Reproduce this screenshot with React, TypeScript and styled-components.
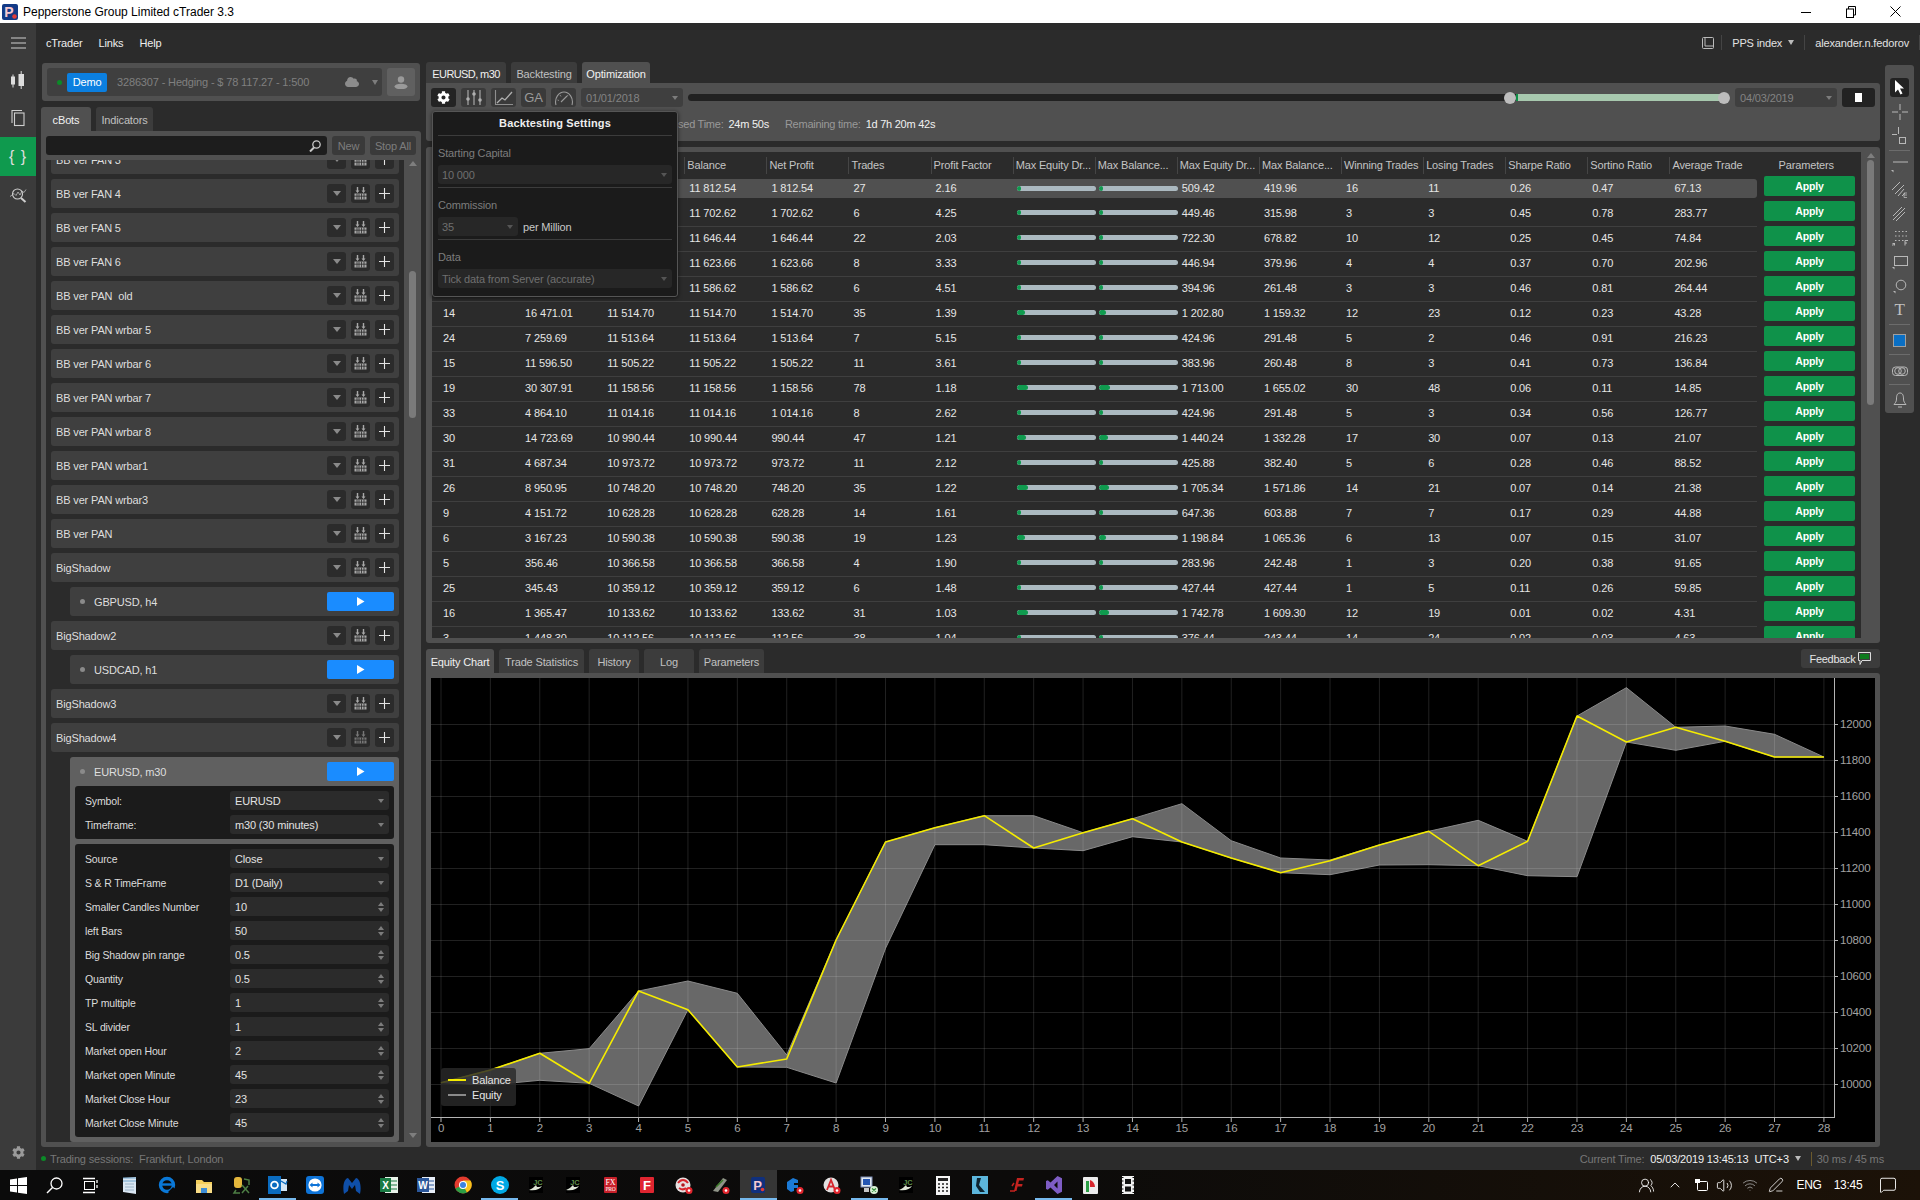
import type { FC, ReactNode } from 'react'
import { ChevronUp, MessageSquare, PenLine, UsersRound, Volume2, Wifi } from 'lucide-react'
import { FaCloud, FaCog } from 'react-icons/fa'
import styled, { createGlobalStyle } from 'styled-components'

const FONT = '"Liberation Sans", Arial, sans-serif'

const GlobalStyle = createGlobalStyle`
  html, body {
    margin: 0;
    padding: 0;
    background: #2b2b2b;
  }
  * {
    box-sizing: border-box;
  }
  body {
    font-family: ${FONT};
    font-size: 11px;
    letter-spacing: -0.15px;
    color: #e2e2e2;
  }
`

// [pass, fitness, balance, net profit, trades, profit factor, max eq dd, max bal dd, win, lose, sharpe, sortino, avg]
const RESULTS: string[][] = [
  ['', '', '11 812.54', '1 812.54', '27', '2.16', '509.42', '419.96', '16', '11', '0.26', '0.47', '67.13'],
  ['', '', '11 702.62', '1 702.62', '6', '4.25', '449.46', '315.98', '3', '3', '0.45', '0.78', '283.77'],
  ['', '', '11 646.44', '1 646.44', '22', '2.03', '722.30', '678.82', '10', '12', '0.25', '0.45', '74.84'],
  ['', '', '11 623.66', '1 623.66', '8', '3.33', '446.94', '379.96', '4', '4', '0.37', '0.70', '202.96'],
  ['', '', '11 586.62', '1 586.62', '6', '4.51', '394.96', '261.48', '3', '3', '0.46', '0.81', '264.44'],
  ['14', '16 471.01', '11 514.70', '1 514.70', '35', '1.39', '1 202.80', '1 159.32', '12', '23', '0.12', '0.23', '43.28'],
  ['24', '7 259.69', '11 513.64', '1 513.64', '7', '5.15', '424.96', '291.48', '5', '2', '0.46', '0.91', '216.23'],
  ['15', '11 596.50', '11 505.22', '1 505.22', '11', '3.61', '383.96', '260.48', '8', '3', '0.41', '0.73', '136.84'],
  ['19', '30 307.91', '11 158.56', '1 158.56', '78', '1.18', '1 713.00', '1 655.02', '30', '48', '0.06', '0.11', '14.85'],
  ['33', '4 864.10', '11 014.16', '1 014.16', '8', '2.62', '424.96', '291.48', '5', '3', '0.34', '0.56', '126.77'],
  ['30', '14 723.69', '10 990.44', '990.44', '47', '1.21', '1 440.24', '1 332.28', '17', '30', '0.07', '0.13', '21.07'],
  ['31', '4 687.34', '10 973.72', '973.72', '11', '2.12', '425.88', '382.40', '5', '6', '0.28', '0.46', '88.52'],
  ['26', '8 950.95', '10 748.20', '748.20', '35', '1.22', '1 705.34', '1 571.86', '14', '21', '0.07', '0.14', '21.38'],
  ['9', '4 151.72', '10 628.28', '628.28', '14', '1.61', '647.36', '603.88', '7', '7', '0.17', '0.29', '44.88'],
  ['6', '3 167.23', '10 590.38', '590.38', '19', '1.23', '1 198.84', '1 065.36', '6', '13', '0.07', '0.15', '31.07'],
  ['5', '356.46', '10 366.58', '366.58', '4', '1.90', '283.96', '242.48', '1', '3', '0.20', '0.38', '91.65'],
  ['25', '345.43', '10 359.12', '359.12', '6', '1.48', '427.44', '427.44', '1', '5', '0.11', '0.26', '59.85'],
  ['16', '1 365.47', '10 133.62', '133.62', '31', '1.03', '1 742.78', '1 609.30', '12', '19', '0.01', '0.02', '4.31'],
  ['3', '1 448.30', '10 112.56', '112.56', '38', '1.04', '376.44', '243.44', '14', '24', '0.02', '0.03', '4.63'],
]

const COLUMNS = [
  'Pass', 'Fitness', 'Equity', 'Balance', 'Net Profit', 'Trades', 'Profit Factor', 'Max Equity Dr...', 'Max Balance...',
  'Max Equity Dr...', 'Max Balance...', 'Winning Trades', 'Losing Trades', 'Sharpe Ratio', 'Sortino Ratio', 'Average Trade',
]

const BOTS = [
  'BB ver FAN 3', 'BB ver FAN 4', 'BB ver FAN 5', 'BB ver FAN 6', 'BB ver PAN  old', 'BB ver PAN wrbar 5', 'BB ver PAN wrbar 6',
  'BB ver PAN wrbar 7', 'BB ver PAN wrbar 8', 'BB ver PAN wrbar1', 'BB ver PAN wrbar3', 'BB ver PAN',
]

const PARAMS: { label: string; value: string; select?: boolean }[] = [
  { label: 'Source', value: 'Close', select: true },
  { label: 'S & R TimeFrame', value: 'D1 (Daily)', select: true },
  { label: 'Smaller Candles Number', value: '10' },
  { label: 'left Bars', value: '50' },
  { label: 'Big Shadow pin range', value: '0.5' },
  { label: 'Quantity', value: '0.5' },
  { label: 'TP multiple', value: '1' },
  { label: 'SL divider', value: '1' },
  { label: 'Market open Hour', value: '2' },
  { label: 'Market open Minute', value: '45' },
  { label: 'Market Close Hour', value: '23' },
  { label: 'Market Close Minute', value: '45' },
]

// chart pixel traces, measured against the screenshot
const BALANCE = [1328, 1290, 1240, 1330, 1053, 1109, 1281, 1257, 900, 606, 563, 527, 624, 578, 536, 606, 654, 698, 662, 615, 574, 677, 604, 228, 306, 262, 304, 351, 351]
const EQUITY_HIGH = [1328, 1290, 1240, 1226, 1053, 1023, 1060, 1245, 900, 606, 563, 527, 527, 578, 536, 491, 602, 654, 660, 615, 574, 541, 604, 228, 143, 262, 258, 283, 351]
const EQUITY_LOW = [1328, 1335, 1321, 1330, 1398, 1109, 1281, 1282, 1329, 925, 614, 614, 624, 632, 590, 606, 654, 698, 704, 675, 674, 677, 707, 710, 306, 331, 304, 351, 351]

const chartX = (i: number) => 10 + 49.39 * i
const chartY = (p: number) => p / 3 - 38
const toPoint = (p: number, i: number) => `${chartX(i).toFixed(1)},${chartY(p).toFixed(1)}`
const toPoints = (trace: number[]) => trace.map(toPoint).join(' ')

const Page = styled.div`
  display: flex;
  flex-direction: column;
  width: 1920px;
  height: 1200px;
  overflow: hidden;
`

const TitleBar = styled.div`
  display: flex;
  align-items: center;
  height: 23px;
  background: #fff;
  color: #000;
  font-size: 12px;
  letter-spacing: 0;
  padding-left: 2px;
`

const TitleText = styled.span`
  margin-left: 5px;
`

const WindowButtons = styled.div`
  display: flex;
  margin-left: auto;
  padding-right: 2px;
`

const WindowButton = styled.div`
  display: flex;
  align-items: center;
  justify-content: center;
  width: 45px;
  height: 20px;
`

const Body = styled.div`
  display: flex;
  height: 1147px;
`

const Rail = styled.div`
  display: flex;
  flex-direction: column;
  align-items: stretch;
  width: 36px;
  background: #3b3b3b;
  padding-top: 1px;
`

const RailItem = styled.div<{ $active?: boolean; $h?: number }>`
  display: flex;
  align-items: center;
  justify-content: center;
  height: ${({ $h }) => $h ?? 38}px;
  background: ${({ $active }) => ($active ? '#0f9a4e' : 'transparent')};
  color: #ddd;
`

const Braces = styled.span`
  font-size: 16px;
  letter-spacing: 1px;
  font-weight: 400;
`

const RailFooter = styled.div`
  display: flex;
  justify-content: center;
  margin-top: auto;
  padding-bottom: 11px;
  color: #9a9a9a;
`

const Workspace = styled.div`
  display: flex;
  flex: 1;
  flex-direction: column;
  min-width: 0;
`

const MenuBar = styled.div`
  display: flex;
  align-items: center;
  height: 39px;
  padding: 0 0 0 10px;
  font-size: 11px;
`

const MenuItem = styled.span`
  margin-right: 16px;
  color: #eee;
`

const MenuRight = styled.div`
  display: flex;
  align-items: center;
  margin-left: auto;
  height: 15px;
`

const MenuDivider = styled.span<{ $before?: number; $after?: number }>`
  width: 1px;
  height: 15px;
  background: #444;
  margin: 0 ${({ $after }) => $after ?? 10}px 0 ${({ $before }) => $before ?? 10}px;
`

const SmallCaret = styled.span`
  display: inline-block;
  width: 0;
  height: 0;
  margin-left: 6px;
  border-left: 3px solid transparent;
  border-right: 3px solid transparent;
  border-top: 5px solid #bbb;
`

const Panes = styled.div`
  display: flex;
  flex: 1;
  min-height: 0;
  gap: 5px;
  padding-left: 5px;
`

const LeftColumn = styled.div`
  display: flex;
  flex-direction: column;
  width: 380px;
`

const AccountPanel = styled.div`
  display: flex;
  gap: 5px;
  width: 378px;
  height: 38px;
  margin: 1px 0 6px 1px;
  padding: 5px;
  background: #505050;
  border-radius: 3px;
`

const AccountBox = styled.div`
  display: flex;
  flex: 1;
  align-items: center;
  padding-left: 10px;
  background: #3f3f3f;
  border-radius: 3px;
  color: #808080;
  font-size: 11px;
`

const GreenDot = styled.span<{ $size?: number }>`
  width: ${({ $size }) => $size ?? 5}px;
  height: ${({ $size }) => $size ?? 5}px;
  border-radius: 50%;
  background: #0c8a28;
  flex-shrink: 0;
`

const DemoBadge = styled.span`
  display: flex;
  align-items: center;
  justify-content: center;
  width: 40px;
  height: 19px;
  margin: 0 10px 0 5px;
  background: #0b7fe0;
  border-radius: 2px;
  color: #fff;
`

const AccountCloud = styled.span`
  display: flex;
  margin-left: auto;
  color: #8c8c8c;
`

const AccountCaret = styled.span`
  display: inline-block;
  margin: 0 4px 0 13px;
  border-left: 3px solid transparent;
  border-right: 3px solid transparent;
  border-top: 5px solid #7d7d7d;
`

const UserBox = styled.div`
  display: flex;
  align-items: center;
  justify-content: center;
  width: 28px;
  background: #606060;
  border-radius: 3px;
`

const TabRow = styled.div<{ $h: number }>`
  display: flex;
  gap: 5px;
  height: ${({ $h }) => $h}px;
  flex-shrink: 0;
`

const Tab = styled.div<{ $active?: boolean; $w: number; $tight?: boolean }>`
  display: flex;
  align-items: center;
  justify-content: center;
  width: ${({ $w }) => $w}px;
  padding-top: 2px;
  background: ${({ $active }) => ($active ? '#505050' : '#3c3c3c')};
  color: ${({ $active, $tight }) => ($active || $tight ? '#f0f0f0' : '#c0c0c0')};
  border-radius: 3px 3px 0 0;
  font-size: 11px;
  letter-spacing: ${({ $tight }) => ($tight ? '-0.6px' : '-0.15px')};
`

const BotsPanel = styled.div`
  display: flex;
  flex: 1;
  flex-direction: column;
  min-height: 0;
  padding: 5px 0 5px 5px;
  background: #505050;
  border-radius: 0 3px 3px 3px;
`

const SearchRow = styled.div`
  display: flex;
  gap: 5px;
  height: 19px;
  margin-bottom: 5px;
  padding-right: 5px;
  flex-shrink: 0;
`

const SearchInput = styled.div`
  display: flex;
  flex: 1;
  align-items: center;
  justify-content: flex-end;
  padding-right: 6px;
  background: #1d1d1d;
  border-radius: 3px;
`

const GhostButton = styled.div<{ $w: number }>`
  display: flex;
  align-items: center;
  justify-content: center;
  width: ${({ $w }) => $w}px;
  background: #3a3a3a;
  border-radius: 3px;
  color: #7d7d7d;
`

const ListArea = styled.div`
  display: flex;
  flex: 1;
  min-height: 0;
`

const BotList = styled.div`
  flex: 1;
  min-width: 0;
  overflow: hidden;
  background: #2b2b2b;
`

const BotScroll = styled.div`
  display: flex;
  flex-direction: column;
  gap: 5px;
  margin-top: -15px;
  padding: 0 5px;
`

const BotCard = styled.div`
  display: flex;
  flex-shrink: 0;
  align-items: center;
  height: 29px;
  padding: 0 5px;
  background: #3f3f3f;
  border-radius: 3px;
  color: #dedede;
  font-size: 11px;
`

const BotName = styled.span`
  white-space: pre;
`

const BotActions = styled.div`
  display: flex;
  gap: 5px;
  margin-left: auto;
`

const SquareButton = styled.div`
  display: flex;
  align-items: center;
  justify-content: center;
  width: 19px;
  height: 19px;
  background: #2b2b2b;
  border-radius: 3px;
`

const InstanceCard = styled.div<{ $open?: boolean }>`
  display: flex;
  flex-shrink: 0;
  flex-direction: column;
  margin-left: 19px;
  padding: ${({ $open }) => ($open ? '0 5px 5px' : '0 5px')};
  background: ${({ $open }) => ($open ? '#606060' : '#3f3f3f')};
  border-radius: 3px;
`

const InstanceHead = styled.div`
  display: flex;
  align-items: center;
  height: 29px;
  padding-left: 5px;
  color: #dedede;
`

const InstanceDot = styled.span`
  width: 5px;
  height: 5px;
  margin-right: 9px;
  border-radius: 50%;
  background: #8a8a8a;
`

const PlayButton = styled.div`
  display: flex;
  align-items: center;
  justify-content: center;
  width: 67px;
  height: 19px;
  margin-left: auto;
  background: #1a8cff;
  border-radius: 2px;
`

const ParamBlock = styled.div`
  display: flex;
  flex-direction: column;
  gap: 5px;
  padding: 5px;
  background: #1b1b1b;
  border-radius: 3px;
  & + & {
    margin-top: 5px;
  }
`

const ParamRow = styled.div`
  display: flex;
  align-items: center;
  height: 19px;
  padding-left: 5px;
  color: #dcdcdc;
`

const ParamLabel = styled.span`
  width: 145px;
  flex-shrink: 0;
  font-size: 10.5px;
`

const ParamInput = styled.div`
  display: flex;
  align-items: center;
  justify-content: space-between;
  width: 159px;
  height: 19px;
  padding: 0 5px;
  background: #2b2b2b;
  border-radius: 3px;
  color: #e2e2e2;
`

const Caret = styled.span<{ $up?: boolean; $color?: string; $size?: number }>`
  display: inline-block;
  width: 0;
  height: 0;
  border-left: ${({ $size }) => $size ?? 3}px solid transparent;
  border-right: ${({ $size }) => $size ?? 3}px solid transparent;
  border-top: ${({ $up, $color, $size }) => ($up ? 'none' : `${($size ?? 3) + 1}px solid ${$color ?? '#7c7c7c'}`)};
  border-bottom: ${({ $up, $color, $size }) => ($up ? `${($size ?? 3) + 1}px solid ${$color ?? '#7c7c7c'}` : 'none')};
`

const Spinner = styled.span`
  display: flex;
  flex-direction: column;
  gap: 2px;
`

const ScrollColumn = styled.div<{ $w: number }>`
  display: flex;
  flex-direction: column;
  align-items: center;
  width: ${({ $w }) => $w}px;
  flex-shrink: 0;
  padding-top: 1px;
`

const ScrollThumb = styled.div<{ $h: number; $top: number }>`
  width: 7px;
  height: ${({ $h }) => $h}px;
  margin-top: ${({ $top }) => $top}px;
  background: #7a7a7a;
  border-radius: 4px;
`

const ScrollEnd = styled.div`
  margin-top: auto;
  padding-bottom: 2px;
`

const RightColumn = styled.div`
  position: relative;
  display: flex;
  flex-direction: column;
  width: 1454px;
`

const ControlsPanel = styled.div`
  height: 58px;
  flex-shrink: 0;
  padding: 5px;
  background: #505050;
  border-radius: 0 3px 3px 3px;
`

const ToolRow = styled.div`
  display: flex;
  gap: 5px;
  height: 19px;
`

const ToolButton = styled.div<{ $active?: boolean }>`
  display: flex;
  align-items: center;
  justify-content: center;
  width: 25px;
  background: ${({ $active }) => ($active ? '#242424' : '#3a3a3a')};
  border-radius: 3px;
  color: ${({ $active }) => ($active ? '#fff' : '#9a9a9a')};
  font-size: 13px;
`

const DateField = styled.div`
  display: flex;
  align-items: center;
  justify-content: space-between;
  width: 102px;
  padding: 0 5px;
  background: #3f3f3f;
  border-radius: 3px;
  color: #838383;
`

const Slider = styled.div`
  position: relative;
  flex: 1;
  height: 7px;
  margin-top: 6px;
  background: #212121;
  border-radius: 4px;
`

const SliderFill = styled.div`
  position: absolute;
  top: 0;
  bottom: 0;
  left: 828px;
  width: 208px;
  background: #a7c8ae;
  border-left: 2px solid #0f8f48;
`

const SliderThumb = styled.div<{ $left: number }>`
  position: absolute;
  top: -2px;
  left: ${({ $left }) => $left}px;
  width: 12px;
  height: 12px;
  background: #bdbdbd;
  border-radius: 50%;
`

const StopButton = styled.div`
  display: flex;
  align-items: center;
  justify-content: center;
  width: 33px;
  background: #222;
  border-radius: 3px;
`

const StopMark = styled.span`
  width: 7px;
  height: 9px;
  background: #fff;
`

const TimeRow = styled.div`
  display: flex;
  align-items: center;
  height: 14px;
  margin-top: 10px;
  padding-left: 226px;
`

const TimeLabel = styled.span`
  color: #999;
  letter-spacing: -0.25px;
`

const TimeValue = styled.span<{ $gap: number }>`
  margin: 0 ${({ $gap }) => $gap}px 0 5px;
  color: #f0f0f0;
  letter-spacing: -0.25px;
`

const TablePanel = styled.div`
  display: flex;
  height: 496px;
  flex-shrink: 0;
  margin: 6px 0;
  padding: 5px 0 5px 6px;
  background: #505050;
  border-radius: 3px;
`

const ResultsTable = styled.div`
  flex: 1;
  min-width: 0;
  overflow: hidden;
  background: #2b2b2b;
  border-radius: 3px 0 0 0;
`

const HeaderRow = styled.div`
  display: flex;
  height: 27px;
  padding: 0 0 1px 6px;
  align-items: center;
`

const HeaderCell = styled.div`
  width: 82.1px;
  flex-shrink: 0;
  height: 17px;
  line-height: 17px;
  padding-left: 2px;
  border-left: 1px solid #454545;
  color: #c4c4c4;
  white-space: nowrap;
  overflow: hidden;
`

const ParamsHeader = styled.div`
  flex: 1;
  text-align: center;
  color: #c4c4c4;
`

const ResultRow = styled.div`
  display: flex;
  height: 25px;
  align-items: flex-start;
`

const RowBand = styled.div<{ $selected?: boolean }>`
  display: flex;
  align-items: center;
  width: 1325px;
  height: ${({ $selected }) => ($selected ? '19px' : '23px')};
  padding: ${({ $selected }) => ($selected ? '0 0 1px 6px' : '0 0 5px 6px')};
  background: ${({ $selected }) => ($selected ? '#505050' : 'transparent')};
  border-radius: ${({ $selected }) => ($selected ? '3px' : '0')};
  border-bottom: ${({ $selected }) => ($selected ? 'none' : '1px solid #3f3f3f')};
`

const Cell = styled.div`
  width: 82.1px;
  flex-shrink: 0;
  padding-left: 5px;
  color: #e6e6e6;
  white-space: nowrap;
`

const BarCell = styled.div`
  width: 82.1px;
  flex-shrink: 0;
  padding-left: 4px;
`

const DrawBar = styled.div`
  width: 79px;
  height: 5px;
  overflow: hidden;
  border-radius: 3px;
  background: #abb9c0;
`

const DrawFill = styled.div`
  height: 100%;
  background: #0f9a4e;
  border-radius: 3px;
`

const ApplyButton = styled.div`
  display: flex;
  align-items: center;
  justify-content: center;
  width: 91px;
  height: 20px;
  margin: -3px 0 0 7px;
  padding-bottom: 1px;
  background: #0f924a;
  border-radius: 2px;
  color: #fff;
  font-weight: 700;
  font-size: 10.5px;
`

const BottomTabs = styled.div`
  display: flex;
  justify-content: space-between;
  height: 24px;
  flex-shrink: 0;
`

const FeedbackButton = styled.div`
  display: flex;
  align-items: center;
  justify-content: center;
  gap: 3px;
  width: 79px;
  height: 19px;
  background: #3c3c3c;
  border-radius: 3px;
  color: #e6e6e6;
  letter-spacing: -0.3px;
`

const ChartPanel = styled.div`
  flex: 1;
  min-height: 0;
  padding: 5px;
  background: #505050;
  border-radius: 0 3px 3px 3px;
`

const ChartSurface = styled.div`
  position: relative;
  width: 1444px;
  height: 464px;
  background: #000;
`

const ChartSvg = styled.svg`
  display: block;
  font-family: ${FONT};
  font-size: 11.5px;
  fill: #a2a2a2;
`

const Legend = styled.div`
  position: absolute;
  left: 10px;
  top: 390px;
  display: flex;
  flex-direction: column;
  justify-content: center;
  gap: 2px;
  width: 75px;
  height: 38px;
  padding-left: 7px;
  background: rgba(42, 42, 42, 0.82);
  border-radius: 3px;
`

const LegendRow = styled.div`
  display: flex;
  align-items: center;
  gap: 6px;
  height: 13px;
  color: #e6e6e6;
`

const LegendSwatch = styled.span<{ $color: string }>`
  width: 18px;
  height: 2px;
  background: ${({ $color }) => $color};
`

const Popup = styled.div`
  position: absolute;
  left: 6px;
  top: 49px;
  display: flex;
  flex-direction: column;
  width: 246px;
  height: 186px;
  padding: 0 5px;
  background: #1b1b1b;
  border: 1px solid #555;
  border-radius: 3px;
  box-shadow: 0 1px 4px rgba(0, 0, 0, 0.6);
`

const PopupTitle = styled.div`
  height: 24px;
  line-height: 23px;
  text-align: center;
  font-weight: 700;
  font-size: 11px;
  letter-spacing: 0.15px;
  color: #eee;
  border-bottom: 1px solid #3c3c3c;
`

const PopupSection = styled.div<{ $last?: boolean }>`
  height: 52px;
  padding-top: 11px;
  color: #7d7d7d;
  font-size: 11px;
  border-bottom: ${({ $last }) => ($last ? 'none' : '1px solid #3c3c3c')};
`

const PopupLabel = styled.div`
  height: 13px;
  line-height: 13px;
  margin-bottom: 5px;
`

const PopupFieldRow = styled.div`
  display: flex;
  align-items: center;
  gap: 5px;
  color: #c8c8c8;
`

const PopupSelect = styled.div<{ $w?: number }>`
  display: flex;
  align-items: center;
  justify-content: space-between;
  width: ${({ $w }) => ($w ? `${$w}px` : '100%')};
  height: 19px;
  padding: 0 5px 0 4px;
  background: #272727;
  border-radius: 3px;
  color: #6f6f6f;
`

const ToolStrip = styled.div`
  display: flex;
  flex-direction: column;
  align-items: center;
  width: 29px;
  height: 348px;
  margin-top: 3px;
  padding-top: 4px;
  background: #505050;
  border-radius: 3px;
`

const Grip = styled.div`
  width: 19px;
  height: 3px;
  margin-bottom: 6px;
  background-image: radial-gradient(#a0a0a0 0.6px, transparent 0.7px);
  background-size: 2px 2px;
`

const StripCursor = styled.div`
  display: flex;
  align-items: center;
  justify-content: center;
  width: 19px;
  height: 19px;
  margin-bottom: 3px;
  background: #222;
  border-radius: 3px;
`

const StripItem = styled.div<{ $h?: number }>`
  display: flex;
  align-items: center;
  justify-content: center;
  width: 24px;
  height: ${({ $h }) => $h ?? 24}px;
  color: #b4b4b4;
`

const StripDivider = styled.div`
  width: 21px;
  height: 1px;
  margin: 2px 0 3px;
  background: #6c6c6c;
`

const Swatch = styled.div`
  width: 13px;
  height: 13px;
  background: #0a6fc4;
  border: 1px solid #a0a0a0;
`

const SerifT = styled.span`
  font-family: "Liberation Serif", serif;
  font-size: 17px;
  color: #c0c0c0;
`

const StatusBar = styled.div`
  display: flex;
  align-items: center;
  height: 23px;
  flex-shrink: 0;
  padding: 0 36px 0 5px;
  color: #777;
`

const StatusText = styled.span`
  margin-left: 4px;
  white-space: pre;
`

const StatusRight = styled.div`
  display: flex;
  align-items: center;
  margin-left: auto;
`

const StatusValue = styled.span`
  margin-left: 6px;
  color: #f0f0f0;
`

const StatusDivider = styled.span`
  width: 1px;
  height: 14px;
  margin: 0 5px 0 10px;
  background: #6b5a2c;
`

const Taskbar = styled.div`
  display: flex;
  align-items: stretch;
  height: 30px;
  flex-shrink: 0;
  background: linear-gradient(90deg, #0b0b0b 0%, #0c0b0a 55%, #1c1208 100%);
  color: #fff;
`

const TaskSlot = styled.div<{ $w?: number; $running?: boolean; $selected?: boolean }>`
  display: flex;
  align-items: center;
  justify-content: center;
  width: ${({ $w }) => $w ?? 36.96}px;
  flex-shrink: 0;
  background: ${({ $selected }) => ($selected ? '#363636' : 'transparent')};
  box-shadow: ${({ $running }) => ($running ? 'inset 0 -2px 0 #76b9ed' : 'none')};
`

const TaskSpacer = styled.div`
  width: 3.5px;
`

const Tray = styled.div`
  display: flex;
  margin-left: auto;
  padding-right: 11px;
  font-size: 12px;
  letter-spacing: -0.3px;
`

const ICON_GREY = '#b8b8b8'

const Svg: FC<{ w?: number; h?: number; vb?: string; children: ReactNode }> = ({ w = 20, h = 20, vb, children }) => (
  <svg width={w} height={h} viewBox={vb ?? `0 0 ${w} ${h}`} fill="none">
    {children}
  </svg>
)

const TriangleDown = () => <Caret $size={4} $color="#8a8a8a" />

const DeployIcon = ({ dim }: { dim?: boolean }) => (
  <Svg w={13} h={13}>
    <g stroke={dim ? '#777' : '#a8a8a8'} strokeWidth="1.4">
      <path d="M3.5 0v4M9.5 0v4" />
    </g>
    <path d="M1.5 3.5h4L3.5 6zM7.5 3.5h4L9.5 6z" fill={dim ? '#777' : '#a8a8a8'} />
    <rect x="0.5" y="6.5" width="12" height="6" fill={dim ? '#777' : '#a8a8a8'} />
    <path d="M0 9.2h13M3 6.5v6M5 6.5v6M7.5 6.5v6M10 6.5v6" stroke="#2b2b2b" strokeWidth="0.8" />
  </Svg>
)

const PlusIcon = () => (
  <Svg w={13} h={13}>
    <path d="M6.5 1v11M1 6.5h11" stroke="#e4e4e4" strokeWidth="1.1" />
  </Svg>
)

const BotRow: FC<{ name: string; dim?: boolean }> = ({ name, dim }) => (
  <BotCard>
    <BotName>{name}</BotName>
    <BotActions>
      <SquareButton>
        <TriangleDown />
      </SquareButton>
      <SquareButton>
        <DeployIcon dim={dim} />
      </SquareButton>
      <SquareButton>
        <PlusIcon />
      </SquareButton>
    </BotActions>
  </BotCard>
)

const PlayGlyph = () => (
  <Svg w={8} h={9}>
    <path d="M0 0l7.5 4.5L0 9z" fill="#fff" />
  </Svg>
)

const Instance: FC<{ name: string }> = ({ name }) => (
  <InstanceCard>
    <InstanceHead>
      <InstanceDot />
      {name}
      <PlayButton>
        <PlayGlyph />
      </PlayButton>
    </InstanceHead>
  </InstanceCard>
)

const OpenInstance = () => (
  <InstanceCard $open>
    <InstanceHead>
      <InstanceDot />
      EURUSD, m30
      <PlayButton>
        <PlayGlyph />
      </PlayButton>
    </InstanceHead>
    <ParamBlock>
      <ParamRow>
        <ParamLabel>Symbol:</ParamLabel>
        <ParamInput>
          EURUSD
          <Caret />
        </ParamInput>
      </ParamRow>
      <ParamRow>
        <ParamLabel>Timeframe:</ParamLabel>
        <ParamInput>
          m30 (30 minutes)
          <Caret />
        </ParamInput>
      </ParamRow>
    </ParamBlock>
    <ParamBlock>
      {PARAMS.map((p) => (
        <ParamRow key={p.label}>
          <ParamLabel>{p.label}</ParamLabel>
          <ParamInput>
            {p.value}
            {p.select ? (
              <Caret />
            ) : (
              <Spinner>
                <Caret $up />
                <Caret />
              </Spinner>
            )}
          </ParamInput>
        </ParamRow>
      ))}
    </ParamBlock>
  </InstanceCard>
)

const drawWidth = (value: string) => Math.max(4, Number(value.replace(/\s/g, '')) / 150)

const ResultLine: FC<{ row: string[]; selected?: boolean }> = ({ row, selected }) => {
  const [pass, fitness, balance, net, trades, factor, maxEq, maxBal, win, lose, sharpe, sortino, avg] = row
  return (
    <ResultRow>
      <RowBand $selected={selected}>
        {[pass, fitness, balance, balance, net, trades, factor].map((v, i) => (
          <Cell key={i}>{v}</Cell>
        ))}
        <BarCell>
          <DrawBar>
            <DrawFill style={{ width: drawWidth(maxEq) }} />
          </DrawBar>
        </BarCell>
        <BarCell>
          <DrawBar>
            <DrawFill style={{ width: drawWidth(maxBal) }} />
          </DrawBar>
        </BarCell>
        {[maxEq, maxBal, win, lose, sharpe, sortino, avg].map((v, i) => (
          <Cell key={i}>{v}</Cell>
        ))}
      </RowBand>
      <ApplyButton>Apply</ApplyButton>
    </ResultRow>
  )
}

const EquityChart = () => {
  const hLines = Array.from({ length: 11 }, (_, k) => 46 + 36 * k)
  const lowerEdge = EQUITY_LOW.map(toPoint).reverse().join(' ')
  return (
    <ChartSvg width={1444} height={464} viewBox="0 0 1444 464">
      <polygon points={`${toPoints(EQUITY_HIGH)} ${lowerEdge}`} fill="#686868" stroke="#8a8a8a" strokeWidth="1" />
      <g stroke="rgba(255,255,255,0.13)" strokeWidth="1">
        {hLines.map((y) => (
          <line key={y} x1="0" x2="1403" y1={y + 0.5} y2={y + 0.5} />
        ))}
        {BALANCE.map((_, i) => (
          <line key={i} x1={chartX(i)} x2={chartX(i)} y1="0" y2="439" />
        ))}
      </g>
      <polyline points={toPoints(BALANCE)} fill="none" stroke="#f5ec00" strokeWidth="1.6" strokeLinejoin="round" />
      <g stroke="#b4b4b4" strokeWidth="1">
        <line x1="0" x2="1404" y1="439.5" y2="439.5" />
        <line x1="1403.5" x2="1403.5" y1="0" y2="440" />
        {hLines.map((y) => (
          <line key={y} x1="1403" x2="1407" y1={y + 0.5} y2={y + 0.5} />
        ))}
        {BALANCE.map((_, i) => (
          <line key={i} x1={chartX(i)} x2={chartX(i)} y1="440" y2="444" />
        ))}
      </g>
      {hLines.map((y, k) => (
        <text key={y} x="1409" y={y + 4}>
          {12000 - 200 * k}
        </text>
      ))}
      {BALANCE.map((_, i) => (
        <text key={i} x={chartX(i)} y="454" textAnchor="middle">
          {i}
        </text>
      ))}
    </ChartSvg>
  )
}

const RailCandles = () => (
  <Svg w={16} h={18}>
    <g fill="#ddd" stroke="#ddd" strokeWidth="1">
      <rect x="1.5" y="6" width="3" height="7" />
      <path d="M3 3.5v13" />
      <rect x="9" y="3.5" width="4.5" height="11" />
      <path d="M11.2 0v18" />
    </g>
  </Svg>
)

const RailCopy = () => (
  <Svg w={16} h={18}>
    <g stroke="#cfcfcf" strokeWidth="1.1">
      <path d="M2 14V1.5h10" />
      <rect x="4.5" y="4" width="9.5" height="12.5" />
    </g>
  </Svg>
)

const RailAnalyze = () => (
  <Svg w={17} h={16}>
    <g stroke="#cfcfcf" strokeWidth="1.1">
      <circle cx="7.5" cy="7" r="5" />
      <path d="M11 11l4.5 4" strokeWidth="2" />
      <path d="M0 9.5l4-3 2 2 2-3.5 2 3 2-4 2 1.5 2-3" strokeWidth="0.7" />
    </g>
  </Svg>
)

const ToolGlyph = {
  sliders: (
    <Svg w={20} h={17}>
      <g stroke="#b0b0b0" strokeWidth="1.1">
        <path d="M4 1v15M10 1v15M16 1v15" />
      </g>
      <circle cx="4" cy="10" r="1.8" fill="#b0b0b0" />
      <circle cx="10" cy="5" r="1.8" fill="#b0b0b0" />
      <circle cx="16" cy="11" r="1.8" fill="#b0b0b0" />
    </Svg>
  ),
  trend: (
    <Svg w={20} h={17}>
      <path d="M1.5 1v14.5H19" stroke="#8e8e8e" strokeWidth="1.1" />
      <path d="M3 14l5-5 3 2 7-8" stroke="#b0b0b0" strokeWidth="1.3" />
    </Svg>
  ),
  gauge: (
    <Svg w={20} h={16}>
      <path d="M2 15C0 8 5 2 10 2s10 6 8 13" stroke="#9a9a9a" strokeWidth="1.1" />
      <path d="M7 12l6-6" stroke="#9a9a9a" strokeWidth="1.1" />
      <path d="M6 5l1 1.5M14 5l-1 1.5M3.5 10l1.5.5" stroke="#9a9a9a" strokeWidth="0.8" />
    </Svg>
  ),
}

const StripGlyph = {
  cursor: (
    <Svg w={11} h={15}>
      <path d="M1 0l9 8.5H6l2.5 5-2 1L4 9.5 1 12.5z" fill="#fff" />
    </Svg>
  ),
  cross: (
    <Svg w={16} h={16}>
      <path d="M8 0v6M8 10v6M0 8h6M10 8h6" stroke={ICON_GREY} />
    </Svg>
  ),
  cropCross: (
    <Svg w={16} h={18}>
      <path d="M6.5 0v7M0 7.5h5" stroke={ICON_GREY} />
      <rect x="7.5" y="10.5" width="6" height="6" stroke={ICON_GREY} />
    </Svg>
  ),
  line: (
    <Svg w={18} h={14}>
      <path d="M2 3h15" stroke={ICON_GREY} />
      <path d="M0 11h2.5v2.5z" fill={ICON_GREY} />
    </Svg>
  ),
  fib: (
    <Svg w={18} h={18}>
      <path d="M1 9l8-8M4 13l9-9M7 15l6-7M11 15l3-3" stroke={ICON_GREY} />
      <path d="M13 12h3M13 14h3M13 16.5h3M13 12v4.5" stroke={ICON_GREY} strokeWidth="0.8" />
    </Svg>
  ),
  channel: (
    <Svg w={15} h={16}>
      <path d="M1 10l9-9M1 14l12-12M4 15l9-9" stroke={ICON_GREY} />
    </Svg>
  ),
  dots: (
    <Svg w={16} h={16}>
      <path d="M3 1.5h13M3 6h13M3 10.5h9M0 15h2" stroke={ICON_GREY} strokeDasharray="1.5 2" />
      <path d="M0 13h3v3z" fill={ICON_GREY} />
      <path d="M13 10.5h3M13 10.5v5M13 13h2" stroke={ICON_GREY} />
    </Svg>
  ),
  rect: (
    <Svg w={16} h={15}>
      <rect x="2.5" y="1.5" width="13" height="9" stroke={ICON_GREY} />
      <path d="M0 12h2.5v2.5z" fill={ICON_GREY} />
    </Svg>
  ),
  circle: (
    <Svg w={14} h={15}>
      <circle cx="8" cy="6" r="4.8" stroke={ICON_GREY} />
      <path d="M0 12h2.5v2.5z" fill={ICON_GREY} />
    </Svg>
  ),
  camera: (
    <Svg w={16} h={11}>
      <rect x="0.5" y="2" width="15" height="8.5" rx="3" stroke={ICON_GREY} />
      <circle cx="6" cy="6" r="3.3" stroke={ICON_GREY} />
      <circle cx="10" cy="6" r="3.3" stroke={ICON_GREY} />
    </Svg>
  ),
  bell: (
    <Svg w={14} h={16}>
      <path d="M7 1C4 1 3.5 4 3.5 7S2 11 1 12.5h12C12 11 10.5 10 10.5 7S10 1 7 1z" stroke={ICON_GREY} />
      <path d="M5 15h4" stroke={ICON_GREY} />
    </Svg>
  ),
}

const Box: FC<{ bg: string; label: string; fg?: string; size?: number; rx?: number; family?: string }> = ({ bg, label, fg = '#fff', size = 11, rx = 1, family = FONT }) => (
  <Svg w={18} h={18}>
    <rect x="0" y="0" width="18" height="18" rx={rx} fill={bg} />
    <text x="9" y={9 + size * 0.36} textAnchor="middle" fontFamily={family} fontSize={size} fontWeight="700" fill={fg}>
      {label}
    </text>
  </Svg>
)

// the three identical platform launchers: black tile, green initials, white wing
const JcLauncher = () => (
  <Svg w={14} h={16}>
    <rect width="14" height="16" fill="#000" />
    <text x="9" y="8" textAnchor="middle" fontFamily={FONT} fontSize="7.5" fontWeight="700" fill="#5f8f4a">
      JC
    </text>
    <path d="M0 13c3-1 5-3 7-5l1 2c2 0 3 0 5-1-2 3-6 5-13 4z" fill="#dfe6d8" />
  </Svg>
)

const RedBadge = () => (
  <>
    <circle cx="14" cy="14.5" r="3.5" fill="#e3262e" />
    <circle cx="14" cy="14.5" r="1.3" fill="#fff" />
  </>
)

const TASK_ICONS: { icon: ReactNode; running?: boolean; selected?: boolean }[] = [
  {
    icon: (
      <Svg w={16} h={19}>
        <path d="M1 2l13 -1v17L1 16z" fill="#d9e6f2" />
        <path d="M1 2h13M1 5h13" stroke="#6ea3c9" />
        <path d="M3 8h9M3 11h9M3 14h9" stroke="#8aa6bd" strokeWidth="0.8" />
      </Svg>
    ),
  },
  {
    icon: (
      <Svg w={18} h={18}>
        <circle cx="9" cy="9" r="6.5" stroke="#0a78d7" strokeWidth="3.4" />
        <path d="M4 8.5h12" stroke="#0a78d7" strokeWidth="2.4" />
        <path d="M16 12l-5 5" stroke="#0b0b0b" strokeWidth="2.6" />
      </Svg>
    ),
  },
  {
    icon: (
      <Svg w={18} h={17}>
        <path d="M1 3h6l2 2h8v11H1z" fill="#f4ce5b" />
        <path d="M1 7h16v9H1z" fill="#f9dd86" />
        <path d="M6 11h6v5H6z" fill="#3e8dd6" />
      </Svg>
    ),
  },
  {
    icon: (
      <Svg w={18} h={18}>
        <rect x="2" y="1" width="8" height="11" rx="3" fill="#e4b73c" />
        <path d="M12 3l5 1v5M4 14l-2 3h6M10 9l7 8M16 10l-6 7" stroke="#4d7f44" strokeWidth="1.5" />
      </Svg>
    ),
  },
  {
    running: true,
    icon: (
      <Svg w={20} h={18}>
        <rect x="7" y="3" width="12" height="12" fill="#d4e7f7" />
        <rect x="0" y="0" width="13" height="18" fill="#0a6cc0" />
        <circle cx="6.5" cy="9" r="3.4" stroke="#fff" strokeWidth="1.8" />
        <path d="M13 5l5 3 1-3" stroke="#0a6cc0" strokeWidth="1.2" />
      </Svg>
    ),
  },
  {
    icon: (
      <Svg w={18} h={18}>
        <rect width="18" height="18" rx="3" fill="#0e74d8" />
        <circle cx="9" cy="9" r="6.6" fill="#fff" />
        <path d="M3.5 9l3-2.6v1.6h5V6.400l3 2.600-3 2.600V10h-5v1.600z" fill="#0e74d8" />
      </Svg>
    ),
  },
  {
    icon: (
      <Svg w={18} h={17}>
        <path d="M1 17C-1 8 2 1 5 1l4 5 4-5c3 0 6 7 4 16l-4-3-1-6-3 4-3-4-1 6z" fill="#0f4fa8" />
      </Svg>
    ),
  },
  {
    icon: (
      <Svg w={18} h={18}>
        <rect x="5" y="1" width="13" height="16" fill="#e8f3ea" />
        <path d="M11 5h6M11 9h6M11 13h6" stroke="#1c7a42" />
        <rect y="2" width="11" height="14" fill="#197a43" />
        <text x="5.500" y="13" textAnchor="middle" fontFamily={FONT} fontSize="10" fontWeight="700" fill="#fff">
          X
        </text>
      </Svg>
    ),
  },
  {
    icon: (
      <Svg w={18} h={18}>
        <rect x="5" y="1" width="13" height="16" fill="#e6edf7" />
        <path d="M12 5h5M12 9h5M12 13h5" stroke="#2b579a" />
        <rect y="2" width="12" height="14" fill="#2b579a" />
        <text x="6" y="13" textAnchor="middle" fontFamily={FONT} fontSize="10" fontWeight="700" fill="#fff">
          W
        </text>
      </Svg>
    ),
  },
  {
    icon: (
      <Svg w={18} h={18}>
        <circle cx="9" cy="9" r="8.5" fill="#e33b2e" />
        <path d="M9 9L1.200 12.500A8.500 8.500 0 0 0 13 16.500z" fill="#2c9f45" />
        <path d="M9 9l4 7.500A8.500 8.500 0 0 0 16.500 4.500H9z" fill="#f7c21b" />
        <circle cx="9" cy="9" r="4" fill="#fff" />
        <circle cx="9" cy="9" r="3" fill="#3b82e0" />
      </Svg>
    ),
  },
  {
    running: true,
    icon: <Box bg="#00a9e5" label="S" size={13} rx={9} />,
  },
  { icon: <JcLauncher /> },
  { icon: <JcLauncher /> },
  {
    icon: (
      <Svg w={13} h={16}>
        <rect width="13" height="16" rx="1" fill="#c8202a" />
        <text x="6.500" y="8" textAnchor="middle" fontFamily="Liberation Serif, serif" fontSize="8" fill="#fff">
          FX
        </text>
        <text x="6.500" y="14" textAnchor="middle" fontFamily="Liberation Serif, serif" fontSize="5.500" fill="#fff">
          PRO
        </text>
      </Svg>
    ),
  },
  {
    icon: (
      <Svg w={14} h={16}>
        <rect width="14" height="16" rx="1" fill="#e02530" />
        <text x="7" y="13" textAnchor="middle" fontFamily={FONT} fontSize="13" fontWeight="700" fill="#fff">
          F
        </text>
      </Svg>
    ),
  },
  {
    icon: (
      <Svg w={18} h={18}>
        <circle cx="8" cy="9" r="7.500" fill="#e6dfdf" />
        <path d="M3 7c3-4 7-4 10 0M4 12c3 2 5 2 7 0" stroke="#d6262d" strokeWidth="2" />
        <circle cx="8" cy="9" r="1.800" fill="#b2161e" />
        <RedBadge />
      </Svg>
    ),
  },
  {
    icon: (
      <Svg w={18} h={18}>
        <path d="M1 15L11 2l4 2-9 12z" fill="#8f9488" />
        <path d="M4 11l7-7" stroke="#3f7d2c" strokeWidth="1.600" />
        <RedBadge />
      </Svg>
    ),
  },
  {
    selected: true,
    running: true,
    icon: (
      <Svg w={14} h={16}>
        <rect width="14" height="16" rx="2" fill="#10307e" />
        <text x="6.500" y="13" textAnchor="middle" fontFamily={FONT} fontSize="13" fontWeight="700" fill="#f6c9d0">
          P
        </text>
        <circle cx="11.500" cy="12.500" r="1.800" fill="#e23b38" />
      </Svg>
    ),
  },
  {
    icon: (
      <Svg w={18} h={18}>
        <path d="M1 6l6-4 5 2v3H8v2h4v3H8v3l-3 1-4-3z" fill="#1b7ad6" />
        <RedBadge />
      </Svg>
    ),
  },
  {
    icon: (
      <Svg w={18} h={18}>
        <circle cx="8" cy="9" r="7.500" fill="#e2dfdf" />
        <path d="M4 14L8 4l4 10M5.500 10.500h5" stroke="#d6262d" strokeWidth="1.800" />
        <RedBadge />
      </Svg>
    ),
  },
  {
    running: true,
    icon: (
      <Svg w={18} h={18}>
        <rect x="1" y="1" width="11" height="10" fill="#e1e9f2" stroke="#7f8fb5" />
        <rect x="3" y="3" width="7" height="6" fill="#2456b3" />
        <path d="M4 12h5v4H4z" fill="#c7c7c7" />
        <circle cx="14" cy="14" r="4" fill="#d9f0d4" />
        <path d="M12 12.500l4 3M16 12.500l-4 3" stroke="#2e8c36" strokeWidth="1.200" />
      </Svg>
    ),
  },
  { icon: <JcLauncher /> },
  {
    icon: (
      <Svg w={14} h={19}>
        <rect width="14" height="19" fill="#f5f5f5" />
        <rect x="2" y="2" width="10" height="3" fill="#222" />
        <path d="M2 8h2M6 8h2M10 8h2M2 11.500h2M6 11.500h2M10 11.500h2M2 15h2M6 15h2M10 15h2" stroke="#222" strokeWidth="1.600" />
      </Svg>
    ),
  },
  {
    icon: (
      <Svg w={16} h={18}>
        <rect width="16" height="18" fill="#5cb6dc" />
        <path d="M5 2h4L7 9l6 7H8L4 10z" fill="#0e2430" />
      </Svg>
    ),
  },
  {
    icon: (
      <Svg w={16} h={18}>
        <path d="M8 2h7l-.6 2.500H10l-.8 3.500h4.400l-.6 2.500H8.600L7.500 15H5z" fill="#c4231f" />
        <path d="M1 15h5M3 10l2-3" stroke="#c4231f" strokeWidth="1.500" />
      </Svg>
    ),
  },
  {
    running: true,
    icon: (
      <Svg w={16} h={18}>
        <path d="M11.500 0L16 2.200v13.600L11.500 18 4.500 11.500 1.800 13.800 0 13V5l1.800-.8L4.500 6.500zM11.500 5.500L8 9l3.500 3.500z" fill="#7e5dc4" />
      </Svg>
    ),
  },
  {
    icon: (
      <Svg w={15} h={17}>
        <rect width="15" height="17" rx="1" fill="#ececec" />
        <path d="M3 15V4h3v11z" fill="#2c9f45" />
        <path d="M7 3c3 1 5 4 5 7H7z" fill="#d6262d" />
      </Svg>
    ),
  },
  {
    icon: (
      <Svg w={12} h={18}>
        <path d="M0 0h12v18H0z" fill="#f2f2f2" />
        <path d="M3 3h6v5H3zM3 10.500h6v5H3z" fill="#111" />
        <path d="M0 1.500h1.500M0 5h1.500M0 9h1.500M0 13h1.500M0 16.500h1.500M10.500 1.500H12M10.500 5H12M10.500 9H12M10.500 13H12M10.500 16.500H12" stroke="#111" />
      </Svg>
    ),
  },
]

const App = () => {
  return (
    <Page>
      <GlobalStyle />
      <TitleBar>
        <Svg w={16} h={16}>
          <rect width="16" height="16" rx="2" fill="#123a86" />
          <text x="7" y="13" textAnchor="middle" fontFamily={FONT} fontSize="14" fontWeight="700" fill="#f6c9d0">
            P
          </text>
          <circle cx="12.500" cy="12.500" r="2.300" fill="#e23b38" />
        </Svg>
        <TitleText>Pepperstone Group Limited cTrader 3.3</TitleText>
        <WindowButtons>
          <WindowButton>
            <Svg w={10} h={10}>
              <path d="M0 5.500h10" stroke="#000" />
            </Svg>
          </WindowButton>
          <WindowButton>
            <Svg w={10} h={12}>
              <rect x="0.500" y="3" width="7" height="8.500" stroke="#000" />
              <path d="M2.500 3V0.500h7V9H7.500" stroke="#000" />
            </Svg>
          </WindowButton>
          <WindowButton>
            <Svg w={11} h={11}>
              <path d="M0.500 0.500l10 10M10.500 0.500l-10 10" stroke="#000" />
            </Svg>
          </WindowButton>
        </WindowButtons>
      </TitleBar>

      <Body>
        <Rail>
          <RailItem $h={37}>
            <Svg w={15} h={12}>
              <path d="M0 1h15M0 6h15M0 11h15" stroke="#cfcfcf" strokeWidth="1.100" />
            </Svg>
          </RailItem>
          <RailItem>
            <RailCandles />
          </RailItem>
          <RailItem>
            <RailCopy />
          </RailItem>
          <RailItem $active $h={39}>
            <Braces>{'{ }'}</Braces>
          </RailItem>
          <RailItem>
            <RailAnalyze />
          </RailItem>
          <RailFooter>
            <FaCog size={13} />
          </RailFooter>
        </Rail>

        <Workspace>
          <MenuBar>
            <MenuItem>cTrader</MenuItem>
            <MenuItem>Links</MenuItem>
            <MenuItem>Help</MenuItem>
            <MenuRight>
              <Svg w={12} h={12}>
                <rect x="0.500" y="0.500" width="11" height="11" rx="1" stroke="#bbb" />
                <path d="M3 0.500v8.500h8.500" stroke="#bbb" />
              </Svg>
              <MenuDivider $before={7} />
              PPS index
              <SmallCaret />
              <MenuDivider />
              alexander.n.fedorov
              <MenuDivider $after={0} />
            </MenuRight>
          </MenuBar>

          <Panes>
            <LeftColumn>
              <AccountPanel>
                <AccountBox>
                  <GreenDot />
                  <DemoBadge>Demo</DemoBadge>
                  3286307 - Hedging - $ 78 117.27 - 1:500
                  <AccountCloud>
                    <FaCloud size={14} />
                  </AccountCloud>
                  <AccountCaret />
                </AccountBox>
                <UserBox>
                  <Svg w={14} h={14}>
                    <circle cx="7" cy="4.500" r="3.200" fill="#9a9a9a" />
                    <ellipse cx="7" cy="11.500" rx="6.500" ry="2.800" fill="#9a9a9a" />
                  </Svg>
                </UserBox>
              </AccountPanel>
              <TabRow $h={24}>
                <Tab $active $w={50}>
                  cBots
                </Tab>
                <Tab $w={57}>Indicators</Tab>
              </TabRow>
              <BotsPanel>
                <SearchRow>
                  <SearchInput>
                    <Svg w={12} h={12}>
                      <circle cx="7.500" cy="4.500" r="3.700" stroke="#c8c8c8" strokeWidth="1.300" />
                      <path d="M5 7.500L1 11.500" stroke="#c8c8c8" strokeWidth="2" />
                    </Svg>
                  </SearchInput>
                  <GhostButton $w={33}>New</GhostButton>
                  <GhostButton $w={46}>Stop All</GhostButton>
                </SearchRow>
                <ListArea>
                  <BotList>
                    <BotScroll>
                      {BOTS.map((name) => (
                        <BotRow key={name} name={name} />
                      ))}
                      <BotRow name="BigShadow" />
                      <Instance name="GBPUSD, h4" />
                      <BotRow name="BigShadow2" />
                      <Instance name="USDCAD, h1" />
                      <BotRow name="BigShadow3" />
                      <BotRow name="BigShadow4" dim />
                      <OpenInstance />
                    </BotScroll>
                  </BotList>
                  <ScrollColumn $w={17}>
                    <Caret $up $size={4} $color="#7e7e7e" />
                    <ScrollThumb $h={147} $top={105} />
                    <ScrollEnd>
                      <Caret $size={4} $color="#7e7e7e" />
                    </ScrollEnd>
                  </ScrollColumn>
                </ListArea>
              </BotsPanel>
            </LeftColumn>

            <RightColumn>
              <TabRow $h={21}>
                <Tab $w={80} $tight>
                  EURUSD, m30
                </Tab>
                <Tab $w={66}>Backtesting</Tab>
                <Tab $active $w={68}>
                  Optimization
                </Tab>
              </TabRow>
              <ControlsPanel>
                <ToolRow>
                  <ToolButton $active>
                    <FaCog size={13} />
                  </ToolButton>
                  <ToolButton>{ToolGlyph.sliders}</ToolButton>
                  <ToolButton>{ToolGlyph.trend}</ToolButton>
                  <ToolButton>GA</ToolButton>
                  <ToolButton>{ToolGlyph.gauge}</ToolButton>
                  <DateField>
                    01/01/2018
                    <Caret />
                  </DateField>
                  <Slider>
                    <SliderFill />
                    <SliderThumb $left={816} />
                    <SliderThumb $left={1030} />
                  </Slider>
                  <DateField>
                    04/03/2019
                    <Caret />
                  </DateField>
                  <StopButton>
                    <StopMark />
                  </StopButton>
                </ToolRow>
                <TimeRow>
                  <TimeLabel>Elapsed Time:</TimeLabel>
                  <TimeValue $gap={16}>24m 50s</TimeValue>
                  <TimeLabel>Remaining time:</TimeLabel>
                  <TimeValue $gap={0}>1d 7h 20m 42s</TimeValue>
                </TimeRow>
              </ControlsPanel>

              <TablePanel>
                <ResultsTable>
                  <HeaderRow>
                    {COLUMNS.map((c, i) => (
                      <HeaderCell key={i}>{c}</HeaderCell>
                    ))}
                    <ParamsHeader>Parameters</ParamsHeader>
                  </HeaderRow>
                  {RESULTS.map((row, i) => (
                    <ResultLine key={i} row={row} selected={i === 0} />
                  ))}
                </ResultsTable>
                <ScrollColumn $w={19}>
                  <Caret $up $size={4} $color="#7e7e7e" />
                  <ScrollThumb $h={245} $top={2} />
                </ScrollColumn>
              </TablePanel>

              <BottomTabs>
                <TabRow $h={24}>
                  <Tab $active $w={68}>
                    Equity Chart
                  </Tab>
                  <Tab $w={85}>Trade Statistics</Tab>
                  <Tab $w={50}>History</Tab>
                  <Tab $w={50}>Log</Tab>
                  <Tab $w={65}>Parameters</Tab>
                </TabRow>
                <FeedbackButton>
                  Feedback
                  <Svg w={13} h={13}>
                    <path d="M0.500 0.500h12v8H4L2 12.500V8.500H0.500z" stroke="#ddd" />
                    <rect x="2" y="2" width="9" height="5" fill="#0e7a1e" />
                  </Svg>
                </FeedbackButton>
              </BottomTabs>
              <ChartPanel>
                <ChartSurface>
                  <EquityChart />
                  <Legend>
                    <LegendRow>
                      <LegendSwatch $color="#f5ec00" />
                      Balance
                    </LegendRow>
                    <LegendRow>
                      <LegendSwatch $color="#8a8a8a" />
                      Equity
                    </LegendRow>
                  </Legend>
                </ChartSurface>
              </ChartPanel>

              <Popup>
                <PopupTitle>Backtesting Settings</PopupTitle>
                <PopupSection>
                  <PopupLabel>Starting Capital</PopupLabel>
                  <PopupSelect>
                    10 000
                    <Caret $color="#555" />
                  </PopupSelect>
                </PopupSection>
                <PopupSection>
                  <PopupLabel>Commission</PopupLabel>
                  <PopupFieldRow>
                    <PopupSelect $w={80}>
                      35
                      <Caret $color="#555" />
                    </PopupSelect>
                    per Million
                  </PopupFieldRow>
                </PopupSection>
                <PopupSection $last>
                  <PopupLabel>Data</PopupLabel>
                  <PopupSelect>
                    Tick data from Server (accurate)
                    <Caret $color="#555" />
                  </PopupSelect>
                </PopupSection>
              </Popup>
            </RightColumn>

            <ToolStrip>
              <Grip />
              <StripCursor>{StripGlyph.cursor}</StripCursor>
              <StripItem>{StripGlyph.cross}</StripItem>
              <StripItem>{StripGlyph.cropCross}</StripItem>
              <StripDivider />
              <StripItem>{StripGlyph.line}</StripItem>
              <StripItem>{StripGlyph.fib}</StripItem>
              <StripItem>{StripGlyph.channel}</StripItem>
              <StripItem>{StripGlyph.dots}</StripItem>
              <StripItem>{StripGlyph.rect}</StripItem>
              <StripItem>{StripGlyph.circle}</StripItem>
              <StripItem>
                <SerifT>T</SerifT>
              </StripItem>
              <StripDivider />
              <StripItem>
                <Swatch />
              </StripItem>
              <StripDivider />
              <StripItem>{StripGlyph.camera}</StripItem>
              <StripDivider />
              <StripItem>{StripGlyph.bell}</StripItem>
            </ToolStrip>
          </Panes>

          <StatusBar>
            <GreenDot />
            <StatusText>Trading sessions:  Frankfurt, London</StatusText>
            <StatusRight>
              Current Time:
              <StatusValue>05/03/2019 13:45:13</StatusValue>
              <StatusValue>UTC+3</StatusValue>
              <SmallCaret />
              <StatusDivider />
              30 ms / 45 ms
            </StatusRight>
          </StatusBar>
        </Workspace>
      </Body>

      <Taskbar>
        <TaskSlot $w={36}>
          <Svg w={17} h={17}>
            <path d="M0 2.500L7 1.500v6.500H0zM8 1.300L17 0v8H8zM0 9h7v6.500L0 14.500zM8 9h9v8l-9-1.300z" fill="#fff" />
          </Svg>
        </TaskSlot>
        <TaskSlot $w={36}>
          <Svg w={17} h={17}>
            <circle cx="10.500" cy="6.500" r="5.500" stroke="#fff" strokeWidth="1.300" />
            <path d="M6.500 10.500L1 16" stroke="#fff" strokeWidth="1.500" />
          </Svg>
        </TaskSlot>
        <TaskSlot $w={36}>
          <Svg w={17} h={17}>
            <rect x="2.500" y="4.500" width="10" height="8" stroke="#fff" />
            <path d="M1 1.500h12M1 15.500h12M15 3v3M15 8v3" stroke="#fff" strokeWidth="1.300" />
          </Svg>
        </TaskSlot>
        <TaskSpacer />
        {TASK_ICONS.map((t, i) => (
          <TaskSlot key={i} $running={t.running} $selected={t.selected}>
            {t.icon}
          </TaskSlot>
        ))}
        <Tray>
          <TaskSlot $w={28}>
            <UsersRound size={17} strokeWidth={1.2} />
          </TaskSlot>
          <TaskSlot $w={30}>
            <ChevronUp size={16} strokeWidth={1.3} />
          </TaskSlot>
          <TaskSlot $w={22}>
            <Svg w={16} h={16}>
              <rect x="4.500" y="4.500" width="10" height="9" rx="1" stroke="#fff" />
              <rect x="2" y="2" width="5" height="4" fill="#fff" />
            </Svg>
          </TaskSlot>
          <TaskSlot $w={24}>
            <Volume2 size={17} strokeWidth={1.2} />
          </TaskSlot>
          <TaskSlot $w={27}>
            <Wifi size={16} strokeWidth={1.2} color="#aaa" />
          </TaskSlot>
          <TaskSlot $w={26}>
            <PenLine size={16} strokeWidth={1.2} />
          </TaskSlot>
          <TaskSlot $w={40}>ENG</TaskSlot>
          <TaskSlot $w={38}>13:45</TaskSlot>
          <TaskSlot $w={42}>
            <MessageSquare size={18} strokeWidth={1.2} />
          </TaskSlot>
        </Tray>
      </Taskbar>
    </Page>
  )
}

export default App
